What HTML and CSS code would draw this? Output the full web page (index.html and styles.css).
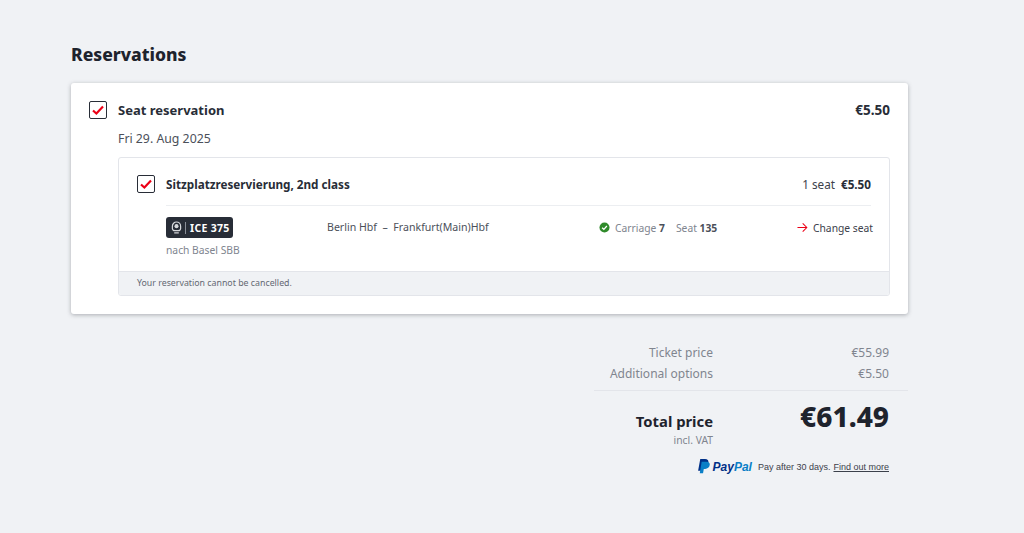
FILE: index.html
```html
<!DOCTYPE html>
<html lang="en">
<head>
  <meta charset="UTF-8" />
  <meta name="viewport" content="width=device-width, initial-scale=1.0" />
  <title>Reservations</title>
  <link rel="stylesheet" href="styles.css">
</head>
<body>
  <div class="page">
    <h2>Reservations</h2>

    <div class="card">
      <div class="card-head">
        <span class="check">
          <svg viewBox="0 0 18 18" width="18" height="18"><path d="M4 9.5l3.4 3L14 5.600" fill="none" stroke="#ec0016" stroke-width="2.2"/></svg>
        </span>
        <strong class="card-title">Seat reservation</strong>
        <strong class="card-price">€5.50</strong>
      </div>
      <p class="date">Fri 29. Aug 2025</p>

      <div class="box">
        <div class="box-body">
          <div class="box-head">
            <span class="check">
              <svg viewBox="0 0 18 18" width="18" height="18"><path d="M4 9.5l3.4 3L14 5.600" fill="none" stroke="#ec0016" stroke-width="2.2"/></svg>
            </span>
            <strong class="box-title">Sitzplatzreservierung, 2nd class</strong>
            <span class="seats">1 seat <strong>€5.50</strong></span>
          </div>

          <div class="trip">
            <div class="train">
              <span class="badge">
                <svg viewBox="0 0 12 14" width="11" height="13"><path d="M6 1a4.500 4.500 0 0 0-4.500 4.500V8A2.500 2.500 0 0 0 4 10.500h4A2.500 2.500 0 0 0 10.500 8V5.500A4.500 4.500 0 0 0 6 1z" fill="none" stroke="#d5d7db" stroke-width="1.300"/><circle cx="6" cy="5.500" r="2.200" fill="#d5d7db"/><path d="M3.500 12.800h5" stroke="#d5d7db" stroke-width="1.300"/></svg>
                <i class="badge-line"></i>
                ICE 375
              </span>
              <span class="dest">nach Basel SBB</span>
            </div>
            <div class="route">Berlin Hbf &nbsp;–&nbsp; Frankfurt(Main)Hbf</div>
            <div class="place">
              <svg viewBox="0 0 12 12" width="11" height="11"><circle cx="6" cy="6" r="5.500" fill="#2f8a2a"/><path d="M3.400 6.200l1.900 1.800 3.300-3.600" fill="none" stroke="#fff" stroke-width="1.400"/></svg>
              <span class="place-text">Carriage <b>7</b></span>
              <span class="place-text seat-no">Seat <b>135</b></span>
            </div>
            <a class="change">
              <svg viewBox="0 0 12 12" width="11" height="11"><path d="M0.500 6h10M6.200 1.500L10.700 6l-4.500 4.500" fill="none" stroke="#ec0016" stroke-width="1.100"/></svg>
              Change seat
            </a>
          </div>
        </div>
        <div class="box-foot">Your reservation cannot be cancelled.</div>
      </div>
    </div>

    <div class="summary">
      <div class="row"><span class="label">Ticket price</span><span class="value">€55.99</span></div>
      <div class="row"><span class="label">Additional options</span><span class="value">€5.50</span></div>
      <div class="total">
        <div class="total-left">
          <strong>Total price</strong>
          <span>incl. VAT</span>
        </div>
        <strong class="total-price">€61.49</strong>
      </div>
      <div class="paypal">
        <svg viewBox="0 0 14 16" width="13" height="15"><path d="M3.500 0h5.200c2.600 0 4 1.400 3.600 3.700-.5 2.800-2.400 4.200-5 4.200H5.500l-.8 4.600H1.200z" fill="#003087"/><path d="M5 3h5.400c2.300 0 3.700 1.300 3.300 3.500-.5 2.700-2.300 4.100-4.900 4.100H7.300l-.8 4.800H3z" fill="#0a7fc7"/></svg>
        <span class="pp-word"><span class="pp-dark">Pay</span><span class="pp-light">Pal</span></span>
        <span class="pp-text">Pay after 30 days.</span>
        <a class="pp-link">Find out more</a>
      </div>
    </div>
  </div>
</body>
</html>
```

FILE: styles.css
```css
body {
  font-family: "Noto Sans", Arial, sans-serif;
  background-color: #f0f2f5;
  color: #282d37;
  margin: 0;
  padding: 0;
}

.page {
  width: 837px;
  margin-left: 71px;
  padding-top: 42px;
}

h2 {
  font-size: 17.500px;
  font-weight: 800;
  line-height: 24px;
  margin: 0 0 17px;
  color: #1e232d;
}

.card {
  background-color: white;
  border-radius: 3px;
  box-shadow: 0 1px 4px rgba(40, 45, 55, 0.35);
  padding: 17px 18px 18px 18px;
  height: 231px;
  box-sizing: border-box;
}

.card-head, .box-head {
  display: flex;
  align-items: center;
}

.check {
  width: 18px;
  height: 18px;
  border: 1.500px solid #282d37;
  border-radius: 2px;
  box-sizing: border-box;
  display: flex;
  align-items: center;
  justify-content: center;
  flex-shrink: 0;
}

.check svg {
  flex-shrink: 0;
}

.card-title {
  margin-left: 11px;
  font-size: 13px;
  line-height: 20px;
}

.card-price {
  margin-left: auto;
  font-size: 13.500px;
}

.date {
  margin: 10px 0 9px 29px;
  font-size: 12.300px;
  line-height: 18px;
  color: #4b505a;
}

.box {
  margin-left: 29px;
  border: 1px solid #e3e5ea;
  border-radius: 3px;
  height: 139px;
  box-sizing: border-box;
  display: flex;
  flex-direction: column;
  overflow: hidden;
}

.box-body {
  flex: 1;
  padding: 17px 18px 0 18px;
}

.box-head {
  padding-bottom: 12px;
}

.box-title {
  margin-left: 11px;
  font-size: 11.700px;
  line-height: 17px;
}

.seats {
  margin-left: auto;
  font-size: 11.700px;
  line-height: 17px;
  color: #3c414b;
}

.seats strong {
  margin-left: 3px;
  color: #282d37;
}

.trip {
  border-top: 1px solid #eceef1;
  margin-left: 29px;
  padding-top: 11px;
  display: flex;
  align-items: flex-start;
}

.train {
  width: 161px;
  flex-shrink: 0;
  display: flex;
  flex-direction: column;
  align-items: flex-start;
}

.badge {
  background-color: #282d37;
  color: white;
  border-radius: 3px;
  height: 21px;
  width: 67px;
  box-sizing: border-box;
  padding-left: 5px;
  display: flex;
  align-items: center;
  font-size: 10.500px;
  letter-spacing: 0.3px;
  font-weight: bold;
  white-space: nowrap;
}

.badge-line {
  width: 1px;
  height: 12px;
  background-color: #8a8f99;
  margin: 0 4px 0 3px;
}

.dest {
  font-size: 10.300px;
  line-height: 14px;
  margin-top: 5px;
  color: #80858f;
}

.route {
  width: 272px;
  flex-shrink: 0;
  font-size: 10.600px;
  line-height: 21px;
  color: #4b505a;
}

.place {
  width: 198px;
  flex-shrink: 0;
  display: flex;
  align-items: center;
  height: 21px;
  font-size: 10.300px;
  color: #80858f;
}

.place-text {
  margin-left: 5px;
}

.seat-no {
  margin-left: 11px;
}

.place b {
  color: #4b505a;
}

.change {
  margin-left: auto;
  display: flex;
  align-items: center;
  gap: 5px;
  height: 21px;
  font-size: 10.300px;
  color: #3c414b;
  white-space: nowrap;
}

.box-foot {
  height: 24px;
  line-height: 23px;
  box-sizing: border-box;
  background-color: #f0f2f5;
  border-top: 1px solid #e3e5ea;
  padding-left: 18px;
  font-size: 8.800px;
  color: #646973;
}

.summary {
  width: 314px;
  margin-left: auto;
  margin-top: 28px;
}

.row {
  display: flex;
  height: 21px;
  align-items: center;
  font-size: 12px;
  color: #80858f;
}

.label {
  width: 119px;
  text-align: right;
}

.value {
  width: 176px;
  text-align: right;
}

.total {
  border-top: 1px solid #e3e5ea;
  margin-top: 6px;
  padding-top: 8px;
  display: flex;
  align-items: flex-start;
}

.total-left {
  width: 119px;
  text-align: right;
  padding-top: 12px;
}

.total-left strong {
  display: block;
  font-size: 14.800px;
  line-height: 20px;
  color: #1e232d;
}

.total-left span {
  display: block;
  font-size: 10.300px;
  line-height: 19px;
  color: #80858f;
}

.total-price {
  width: 176px;
  text-align: right;
  font-size: 28px;
  font-weight: 800;
  line-height: 34px;
  color: #1e232d;
}

.paypal {
  width: 295px;
  margin-top: 9px;
  display: flex;
  align-items: center;
  justify-content: flex-end;
  font-family: "Liberation Sans", Arial, sans-serif;
  font-size: 9px;
  color: #3c414b;
}

.pp-word {
  margin-left: 3px;
  margin-right: 6px;
  font-size: 12px;
  font-weight: bold;
  font-style: italic;
}

.pp-dark {
  color: #003087;
}

.pp-light {
  color: #0a7fc7;
}

.pp-link {
  margin-left: 3px;
  text-decoration: underline;
}
```
